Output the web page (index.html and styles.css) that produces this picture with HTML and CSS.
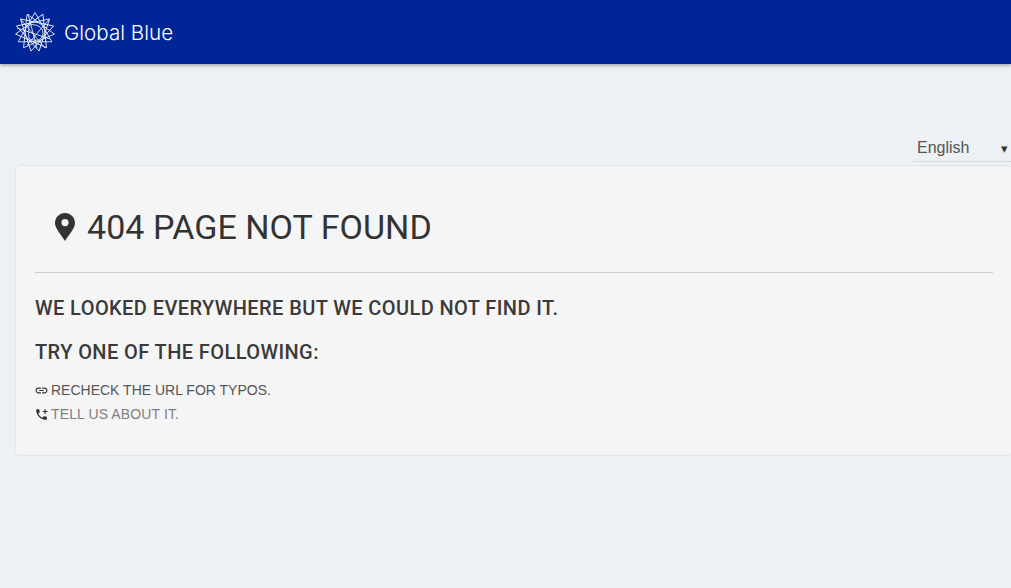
FILE: index.html
```html
<!DOCTYPE html>
<html lang="en">
<head>
  <meta charset="UTF-8">
  <meta name="viewport" content="width=device-width, initial-scale=1.0">
  <title>404 page not found</title>
  <link rel="stylesheet" href="styles.css">
</head>
<body>
  <header class="topbar">
    <svg class="logo" width="40" height="40" viewBox="0 0 40 40" fill="none" stroke="#fff" stroke-width="0.8">
      <defs>
        <path id="tri" d="M20 .5 36.89 29.75H3.11Z"/>
      </defs>
      <use href="#tri"/>
      <use href="#tri" transform="rotate(24 20 20)"/>
      <use href="#tri" transform="rotate(48 20 20)"/>
      <use href="#tri" transform="rotate(72 20 20)"/>
      <use href="#tri" transform="rotate(96 20 20)"/>
      <path d="M5.5 7 30 36M34.5 7 12 33M2 16 35 27M13 2 22 36"/>
      <path d="M14 13C23 11 30 17 27.5 24C25 29.5 19 29 14 26.5C13.5 22 13.5 17 14 13Z"/>
    </svg>
    <span class="brand">Global Blue</span>
  </header>

  <div class="lang-row">
    <div class="lang-select">
      <span>English</span>
      <span class="caret">&#9662;</span>
    </div>
  </div>

  <main class="card">
    <h1 class="title">
      <svg class="pin" width="20" height="28" viewBox="0 0 20 28">
        <path fill="#333" fill-rule="evenodd" d="M10 0C4.5 0 0 4.4 0 10C0 15.5 7 23 10 28C13 23 20 15.5 20 10C20 4.4 15.5 0 10 0ZM10 6A3.6 3.6 0 1 1 10 13.2A3.6 3.6 0 1 1 10 6Z"/>
      </svg>
      404 PAGE NOT FOUND
    </h1>
    <hr class="rule">
    <h2 class="subtitle">WE LOOKED EVERYWHERE BUT WE COULD NOT FIND IT.</h2>
    <h2 class="subtitle">TRY ONE OF THE FOLLOWING:</h2>
    <ul class="tips">
      <li>
        <svg class="tip-icon" width="13" height="13" viewBox="0 0 24 24"><path fill="#333" d="M3.9 12c0-1.71 1.39-3.1 3.1-3.1h4V7H7c-2.76 0-5 2.24-5 5s2.24 5 5 5h4v-1.9H7c-1.71 0-3.1-1.39-3.1-3.1zM8 13h8v-2H8v2zm9-6h-4v1.9h4c1.71 0 3.1 1.39 3.1 3.1s-1.39 3.1-3.1 3.1h-4V17h4c2.76 0 5-2.24 5-5s-2.24-5-5-5z"/></svg>
        RECHECK THE URL FOR TYPOS.
      </li>
      <li class="muted">
        <svg class="tip-icon" width="13" height="13" viewBox="0 0 24 24"><path fill="#333" d="M20 15.5c-1.25 0-2.45-.2-3.57-.57-.35-.11-.74-.03-1.02.24l-2.2 2.2c-2.83-1.44-5.15-3.75-6.59-6.59l2.2-2.21c.28-.26.36-.65.25-1C8.7 6.45 8.5 5.25 8.5 4c0-.55-.45-1-1-1H4c-.55 0-1 .45-1 1 0 9.39 7.61 17 17 17 .55 0 1-.45 1-1v-3.5c0-.55-.45-1-1-1zM19 3h-2v3h-3v2h3v3h2V8h3V6h-3z"/></svg>
        TELL US ABOUT IT.
      </li>
    </ul>
  </main>
</body>
</html>
```

FILE: styles.css
```css
html, body {
  height: 100%;
}
body {
  margin: 0;
  background: #edf0f5;
  color: #333;
  font-family: "Liberation Sans", Arial, sans-serif;
  overflow: hidden;
}

.topbar {
  display: flex;
  align-items: center;
  gap: 9px;
  height: 64px;
  padding-left: 15px;
  background: #002596;
  box-shadow: 0 1px 4px rgba(0, 0, 0, 0.4);
}
.brand {
  color: #fff;
  font-family: Inter, sans-serif;
  font-weight: 300;
  font-size: 20.6px;
}

.lang-row {
  display: flex;
  justify-content: flex-end;
  padding-top: 71px;
  height: 27px;
}
.lang-select {
  display: flex;
  justify-content: space-between;
  align-items: center;
  width: 94px;
  padding-left: 4px;
  border-bottom: 1px solid #d5d8dd;
  color: #555;
  font-size: 16px;
}
.caret {
  font-size: 13px;
  color: #333;
  padding-right: 3px;
}

.card {
  box-sizing: border-box;
  width: 998px;
  height: 291px;
  margin: 3px 0 0 15px;
  padding: 0 19px;
  background: #f5f5f5;
  border: 1px solid #e3e5e8;
  border-radius: 5px;
}
.title {
  display: flex;
  align-items: center;
  gap: 12px;
  box-sizing: border-box;
  height: 106px;
  margin: 0;
  padding: 16px 0 0 20px;
  font-family: Roboto, sans-serif;
  font-weight: 400;
  font-size: 34px;
  letter-spacing: 0.05px;
  color: #333;
}
.rule {
  margin: 0;
  border: 0;
  border-top: 1px solid #ccc;
}
.subtitle {
  margin: 0;
  padding-top: 25px;
  font-family: Roboto, sans-serif;
  font-weight: 500;
  font-size: 20px;
  line-height: 20px;
  letter-spacing: 0.41px;
  color: #3a3a3a;
}
.subtitle + .subtitle {
  padding-top: 24px;
}
.tips {
  list-style: none;
  margin: 16px 0 0;
  padding: 0;
  font-size: 14px;
  line-height: 24px;
  color: #555;
}
.tips li {
  display: flex;
  align-items: center;
  gap: 3px;
}
.tip-icon {
  transform: scale(1.1);
}
.muted {
  color: #808080;
  letter-spacing: 0.12px;
}
```
